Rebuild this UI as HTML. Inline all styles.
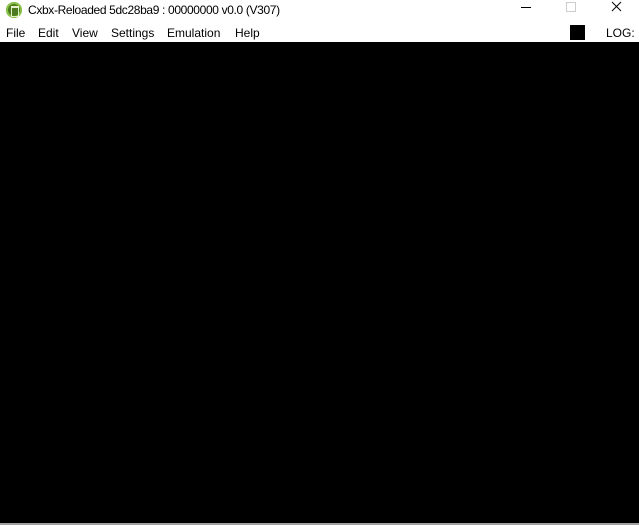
<!DOCTYPE html>
<html><head><meta charset="utf-8"><style>
html,body{margin:0;padding:0;width:639px;height:525px;overflow:hidden;background:#fff;font-family:"Liberation Sans",sans-serif;font-size:12px;color:#000}
.title{position:absolute;left:0;top:0;width:639px;height:22px;background:#fff}
.icon{position:absolute;left:6px;top:2px;width:16px;height:16px;border-radius:50%;background:#4d7a1e;box-shadow:inset 0 0 0 2px #8cc34a}
.icon:after{content:"";position:absolute;left:5px;top:4px;width:6px;height:8px;border:1px solid #e6f0c8;border-top:2px solid #e6f0c8}
.tt{position:absolute;left:28px;top:3px;font-size:12px;letter-spacing:-0.35px}
.menu{position:absolute;left:0;top:22px;width:639px;height:20px;background:#fff}
.menu span{position:absolute;top:4px}
.black{position:absolute;left:0;top:42px;width:639px;height:481px;background:#000}
.bot{position:absolute;left:0;top:523px;width:639px;height:2px;background:#a0a0a0}
</style></head><body>
<div class="title">
<div class="icon"></div>
<div class="tt">Cxbx-Reloaded 5dc28ba9 : 00000000 v0.0 (V307)</div>
<svg style="position:absolute;left:515px;top:0" width="124" height="22">
<line x1="6" y1="7.5" x2="16" y2="7.5" stroke="#000" stroke-width="1"/>
<rect x="51.5" y="2.5" width="9" height="9" fill="none" stroke="#ccc"/>
<line x1="97" y1="2" x2="106" y2="11" stroke="#000"/>
<line x1="106" y1="2" x2="97" y2="11" stroke="#000"/>
</svg>
</div>
<div class="menu">
<span style="left:6px">File</span>
<span style="left:38px">Edit</span>
<span style="left:72px">View</span>
<span style="left:111px">Settings</span>
<span style="left:167px">Emulation</span>
<span style="left:235px">Help</span>
<div style="position:absolute;left:570px;top:3px;width:15px;height:15px;background:#000"></div>
<span style="left:606px">LOG:</span>
</div>
<div class="black"></div>
<div class="bot"></div>
</body></html>
